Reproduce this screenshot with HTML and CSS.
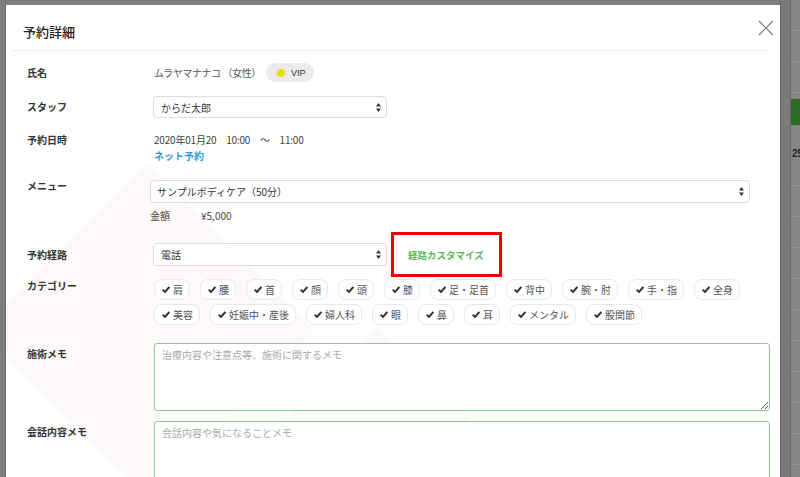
FILE: index.html
```html
<!DOCTYPE html>
<html lang="ja">
<head>
  <meta charset="UTF-8">
  <title>予約詳細</title>
  <link rel="stylesheet" href="styles.css">
</head>
<body>

  <div class="page">
    <div class="side side-left"></div>

    <!-- Reservation detail modal -->
    <div class="modal">
      <div class="modal-header">
        <h1>予約詳細</h1>
        <button type="button" class="close" aria-label="閉じる">
          <svg width="16" height="16" viewBox="0 0 16 16"><path d="M1 1 L15 15 M15 1 L1 15" stroke="#777" stroke-width="1.1" fill="none"/></svg>
        </button>
      </div>
      <div class="modal-divider"></div>

      <div class="modal-body">
        <div class="row row-name">
          <div class="label">氏名</div>
          <div class="value">
            <span class="customer">ムラヤマナナコ （女性）</span>
            <span class="vip"><i class="dot"></i>VIP</span>
          </div>
        </div>

        <div class="row row-staff">
          <div class="label">スタッフ</div>
          <div class="value">
            <select class="select select-short"><option>からだ太郎</option></select>
          </div>
        </div>

        <div class="row row-date">
          <div class="label">予約日時</div>
          <div class="value">
            <div class="date">2020年01月20　10:00　〜　11:00</div>
            <a href="#" class="net">ネット予約</a>
          </div>
        </div>

        <div class="row row-menu">
          <div class="label">メニュー</div>
          <div class="value">
            <select class="select select-wide"><option>サンプルボディケア（50分）</option></select>
            <div class="price"><span class="price-label">金額</span>¥5,000</div>
          </div>
        </div>

        <div class="row row-route">
          <div class="label">予約経路</div>
          <div class="value">
            <select class="select select-short"><option>電話</option></select>
            <div class="highlight"><a href="#" class="customize">経路カスタマイズ</a></div>
          </div>
        </div>

        <div class="row row-category">
          <div class="label">カテゴリー</div>
          <div class="value chips" id="chips"></div>
        </div>

        <div class="row row-memo">
          <div class="label">施術メモ</div>
          <div class="value">
            <textarea class="memo" placeholder="治療内容や注意点等、施術に関するメモ"></textarea>
          </div>
        </div>

        <div class="row row-memo row-talk">
          <div class="label">会話内容メモ</div>
          <div class="value">
            <textarea class="memo" placeholder="会話内容や気になることメモ"></textarea>
          </div>
        </div>
      </div>
    </div>

    <div class="side side-right">
      <div class="green-tab"></div>
      <span class="num">25</span>
    </div>
  </div>

  <script>
    const categories = ['肩', '腰', '首', '顔', '頭', '膝', '足・足首', '背中', '腕・肘', '手・指', '全身',
      '美容', '妊娠中・産後', '婦人科', '眼', '鼻', '耳', 'メンタル', '股関節'];
    const chips = document.getElementById('chips');
    const check = '<svg width="8" height="7" viewBox="0 0 8 7"><path d="M0.7 3.6 L3 5.9 L7.4 1" stroke="#333" stroke-width="2" fill="none"/></svg>';

    categories.forEach(name => {
      const chip = document.createElement('span');
      chip.className = 'chip';
      chip.innerHTML = check + '<span>' + name + '</span>';
      chips.appendChild(chip);
    });
  </script>

</body>
</html>
```

FILE: styles.css
```css
* {
  box-sizing: border-box;
}

body {
  margin: 0;
  font-family: "Noto Sans CJK JP", "Noto Sans", sans-serif;
  color: #333;
  background: #7f7f7f;
}

.page {
  display: flex;
  height: 477px;
  overflow: hidden;
}

.side {
  background: #7d7d7d;
}

.side-left {
  width: 6px;
  border-right: 1px solid #6c6c6c;
}

.side-right {
  width: 20px;
  padding-top: 99px;
  background:
    linear-gradient(to right, #7a7a7a 9px, #686868 9px 10px, transparent 10px),
    repeating-linear-gradient(#858585 0 30px, #939393 30px 31px);
  border-left: 1px solid #6a6a6a;
}

.green-tab {
  height: 26px;
  margin-left: 10px;
  background: #2c6a26;
}

.num {
  display: block;
  margin-top: 23px;
  padding-left: 11px;
  font-family: "Liberation Sans", Arial, sans-serif;
  font-size: 10px;
  font-weight: bold;
  color: #222;
}

/* modal */
.modal {
  width: 774px;
  margin-top: 5px;
  background-color: #fff;
  background-image: url("data:image/svg+xml,%3Csvg xmlns='http://www.w3.org/2000/svg' width='774' height='472'%3E%3Cg fill='%23fdf9f9'%3E%3Cpolygon points='141,158 308,325 141,492 -26,325'/%3E%3Cpolygon points='372,322 542,492 202,492'/%3E%3C/g%3E%3C/svg%3E");
  background-repeat: no-repeat;
}

.modal-header {
  display: flex;
  justify-content: space-between;
  align-items: center;
  height: 45px;
  padding: 0 6px 0 17px;
}

.modal-header h1 {
  margin: 8px 0 0;
  font-size: 13px;
  font-weight: 500;
  color: #222;
}

.close {
  background: none;
  border: none;
  padding: 0;
  width: 16px;
  height: 16px;
  cursor: pointer;
}

.modal-divider {
  height: 1px;
  margin: 0 12px 0 6px;
  background: #eeeeee;
}

.modal-body {
  padding-top: 12px;
}

.row {
  display: flex;
  align-items: center;
}

.label {
  flex: 0 0 148px;
  padding-left: 21px;
  font-size: 10px;
  font-weight: bold;
  line-height: 14px;
  color: #333;
}

.value {
  flex: 1;
  display: flex;
  align-items: center;
  font-size: 10px;
  color: #444;
}

/* name */
.row-name {
  height: 19px;
}

.customer {
  color: #555;
  font-size: 10px;
  letter-spacing: -0.4px;
}

.vip {
  display: inline-flex;
  align-items: center;
  height: 19px;
  margin-left: 5px;
  padding: 0 9px 0 11px;
  border-radius: 10px;
  background: #ebebeb;
  font-family: "Liberation Sans", Arial, sans-serif;
  font-size: 9px;
  color: #333;
}

.vip .dot {
  width: 8px;
  height: 8px;
  margin-right: 6px;
  border-radius: 50%;
  background: #e8dc00;
}

/* selects */
.select {
  appearance: none;
  -webkit-appearance: none;
  height: 22px;
  padding: 0 7px;
  border: 1px solid #dddddd;
  border-radius: 4px;
  font-family: inherit;
  font-size: 10px;
  color: #333;
  background: #fff url("data:image/svg+xml,%3Csvg xmlns='http://www.w3.org/2000/svg' width='5' height='9'%3E%3Cpath d='M2.5 0 L5 3.5 L0 3.5 Z M2.5 9 L5 5.5 L0 5.5 Z' fill='%23333'/%3E%3C/svg%3E") no-repeat right 5px center;
}

.select-short {
  width: 234px;
  margin-left: -1px;
}

.row-staff {
  margin-top: 14px;
}

/* date */
.row-date {
  margin-top: 14px;
  align-items: flex-start;
}

.row-date .label {
  line-height: 16px;
}

.row-date .value {
  display: block;
  line-height: 16px;
}

.date {
  color: #444;
  letter-spacing: -0.2px;
}

.net {
  display: block;
  color: #3a9ad9;
  font-weight: bold;
  text-decoration: none;
}

/* menu */
.row-menu {
  margin-top: 16px;
  align-items: flex-start;
}

.row-menu .label {
  line-height: 12px;
}

.row-menu .value {
  display: block;
  margin-left: -4px;
}

.select-wide {
  width: 600px;
  height: 23px;
  padding-left: 6px;
}

.price {
  margin-top: 5px;
  line-height: 16px;
  color: #444;
}

.price-label {
  display: inline-block;
  width: 51px;
}

/* route */
.row-route {
  margin-top: 8px;
}

.row-route .select {
  height: 23px;
}

.highlight {
  display: flex;
  align-items: center;
  width: 111px;
  height: 45px;
  margin-left: 4px;
  padding-left: 14px;
  border: 3px solid #f00000;
}

.customize {
  color: #5cb85c;
  font-size: 9.5px;
  font-weight: bold;
  text-decoration: none;
}

/* category chips */
.row-category {
  margin-top: 2px;
  align-items: flex-start;
}

.chips {
  flex-wrap: wrap;
  gap: 4px 10px;
}

.chip {
  display: inline-flex;
  align-items: center;
  height: 21px;
  padding: 0 6px 0 7px;
  border: 1px solid #e8e8e8;
  border-radius: 8px;
  background: #fff;
  color: #555;
}

.chip svg {
  margin-right: 3px;
}

/* memos */
.row-memo {
  margin-top: 18px;
  align-items: flex-start;
}

.row-memo .label {
  padding-top: 4px;
}

.row-talk {
  margin-top: 10px;
}

.memo {
  width: 616px;
  height: 68px;
  padding: 4px 7px;
  border: 1px solid #8ccf8c;
  border-radius: 3px;
  font-family: inherit;
  font-size: 10px;
  line-height: 14px;
  color: #333;
  background: #fff;
}

.memo::placeholder {
  color: #aaa;
}
```
